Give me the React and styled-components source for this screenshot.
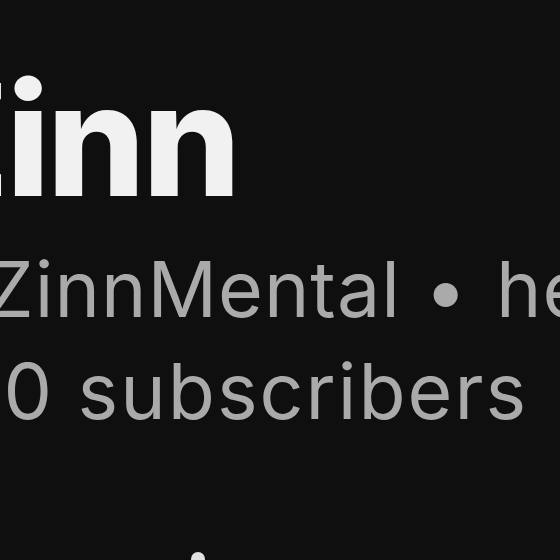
import React from "react";
import styled, { createGlobalStyle } from "styled-components";

const Global = createGlobalStyle`
  html, body { margin: 0; padding: 0; background: #0f0f0f; }
  body { font-family: Inter, Roboto, "Noto Sans", Arial, sans-serif; }
`;

const Page = styled.div`
  width: 560px;
  height: 560px;
  overflow: hidden;
  background: #0f0f0f;
`;

const Header = styled.div`
  display: flex;
  flex-direction: column;
  margin-left: -90px;
  padding-top: 60px;
  white-space: nowrap;
`;

const Title = styled.h1`
  margin: 0 0 18px -6px;
  font-size: 155px;
  line-height: 160px;
  font-weight: 800;
  color: #f1f1f1;
  letter-spacing: -3px;
`;

const Meta = styled.div`
  font-size: 77px;
  line-height: 102px;
  font-weight: 400;
  color: #aaaaaa;
  letter-spacing: ${(p) => p.$tracking || 1}px;
  margin-left: ${(p) => p.$shift || 0}px;
`;

const Dot = styled.span`
  margin: 0 0.36em 0 0.3em;
`;

const MoreRow = styled.div`
  display: flex;
  margin-top: 107px;
  padding-left: 278px;
`;

export default function App() {
  return (
    <Page>
      <Global />
      <Header>
        <Title>Zinn</Title>
        <Meta $tracking={1}>
          @ZinnMental<Dot>•</Dot>here
        </Meta>
        <Meta $tracking={2} $shift={-6}>890 subscribers</Meta>
        <MoreRow>
          <svg width="20" height="20" viewBox="0 0 20 20">
            <circle cx="10" cy="10" r="7" fill="#e0e0e0" />
          </svg>
        </MoreRow>
      </Header>
    </Page>
  );
}
